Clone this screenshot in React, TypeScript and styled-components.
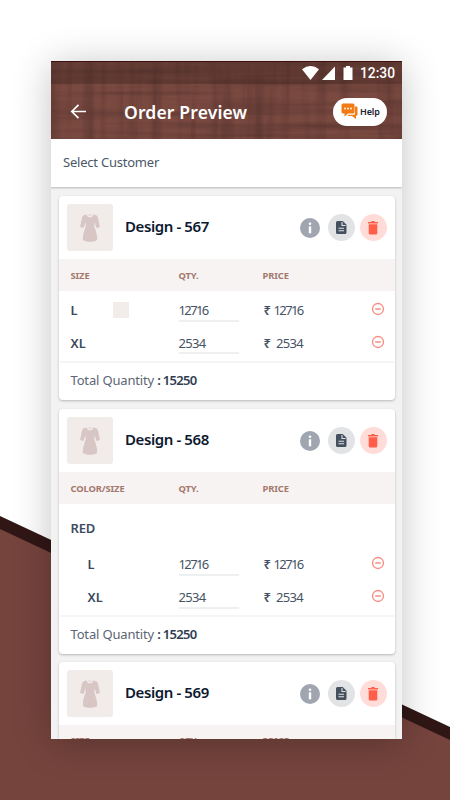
import React from "react";
import styled, { createGlobalStyle } from "styled-components";

const Global = createGlobalStyle`
  * { box-sizing: border-box; }
  body { margin: 0; font-family: "Noto Sans", "Open Sans", sans-serif; }
`;

const Page = styled.main`
  position: relative;
  width: 450px;
  height: 800px;
  padding: 61px 48px 61px 51px;
  overflow: hidden;
  background: #fff;
  isolation: isolate;
  &::before, &::after {
    content: "";
    position: absolute;
    inset: 0;
    z-index: -1;
  }
  &::before {
    background: #301716;
    clip-path: polygon(0 516px, 100% 727px, 100% 100%, 0 100%);
  }
  &::after {
    background: #75443d;
    clip-path: polygon(0 529px, 100% 740px, 100% 100%, 0 100%);
  }
`;

const Phone = styled.div`
  width: 351px;
  height: 678px;
  background: #f2f2f2;
  box-shadow: 0 4px 36px rgba(0, 0, 0, 0.24);
`;

const Screen = styled.div`
  display: flex;
  flex-direction: column;
  height: 100%;
  overflow: hidden;
`;

const Header = styled.header`
  position: relative;
  flex: none;
  height: 78px;
  border-top: 1px solid #3f0f0d;
  background: #7a4a40;
  isolation: isolate;
`;

const Fabric = styled.svg`
  position: absolute;
  inset: 0;
  width: 100%;
  height: 100%;
  z-index: -1;
  opacity: 0.6;
`;

const StatusBar = styled.div`
  display: flex;
  align-items: center;
  justify-content: flex-end;
  height: 22px;
  padding-right: 7px;
  background: rgba(50, 28, 26, 0.27);
  color: #fff;
  svg { display: block; }
`;

const Clock = styled.span`
  margin-left: 6.5px;
  font: 500 13.8px/22px Roboto, sans-serif;
`;

const TitleBar = styled.div`
  display: flex;
  align-items: center;
  height: 55px;
  padding: 0 15px 0 19px;
`;

const Title = styled.h1`
  flex: 1;
  margin: 0 0 0 37px;
  font-size: 17.5px;
  font-weight: 650;
  letter-spacing: 0.16px;
  color: #fff;
  white-space: nowrap;
`;

const HelpButton = styled.button`
  display: flex;
  align-items: center;
  gap: 2px;
  width: 54px;
  height: 28px;
  padding: 0 0 0 8px;
  border: 0;
  border-radius: 14px;
  background: #fff;
  color: #20202e;
  font: 600 9px "Noto Sans", sans-serif;
  letter-spacing: -0.15px;
`;

const Customer = styled.div`
  flex: none;
  height: 48px;
  padding-left: 12px;
  background: #fff;
  box-shadow: 0 1px 2px rgba(0, 0, 0, 0.25);
  color: #4b5868;
  font-size: 13px;
  line-height: 47px;
  letter-spacing: -0.22px;
`;

const List = styled.section`
  display: flex;
  flex-direction: column;
  gap: 9px;
  padding: 9px 7px 0 8px;
`;

const Card = styled.article`
  flex: none;
  overflow: hidden;
  border-radius: 4px;
  background: #fff;
  box-shadow: 0 1px 2.5px rgba(0, 0, 0, 0.25);
  &:last-child { margin-top: -1px; }
`;

const CardHeader = styled.div`
  display: flex;
  align-items: center;
  height: 63px;
  padding: 0 8.5px 0 8px;
`;

const Thumb = styled.div`
  display: flex;
  align-items: center;
  justify-content: center;
  width: 46px;
  height: 47px;
  border-radius: 3px;
  background: #f1ebea;
`;

const Name = styled.h2`
  flex: 1;
  margin: -3px 0 0 12px;
  font-size: 15px;
  font-weight: 600;
  letter-spacing: -0.4px;
  color: #0c1930;
  white-space: nowrap;
`;

const Round = styled.button<{ $size: number; $bg: string; $gap: number }>`
  display: flex;
  align-items: center;
  justify-content: center;
  flex: none;
  width: ${(p) => p.$size}px;
  height: ${(p) => p.$size}px;
  margin-left: ${(p) => p.$gap}px;
  padding: 0;
  border: 0;
  border-radius: 50%;
  background: ${(p) => p.$bg};
`;

const Columns = styled.div`
  display: grid;
  grid-template-columns: 108px 85px 1fr 14px;
  padding: 0 10px 0 11.5px;
`;

const TableHead = styled(Columns)`
  grid-template-columns: 108px 84px 1fr 14px;
  height: 32px;
  background: #f7f3f2;
  color: #a3796d;
  font-size: 9.4px;
  font-weight: 700;
  line-height: 34px;
  letter-spacing: -0.12px;
  ${Card}:last-child & { line-height: 32px; }
`;

const Group = styled.div`
  height: 41px;
  padding-top: 6px;
  padding-left: 11.5px;
  color: #3e4c5f;
  font-size: 13px;
  font-weight: 600;
  line-height: 36px;
  letter-spacing: -0.2px;
`;

const Row = styled(Columns)<{ $h: number }>`
  height: ${(p) => p.$h}px;
  color: #465364;
  font-size: 13px;
  line-height: 38px;
`;

const Size = styled.div<{ $indent: boolean }>`
  display: flex;
  align-items: center;
  height: 37px;
  padding-left: ${(p) => (p.$indent ? 17 : 0)}px;
  color: #3a475a;
  font-size: 12.8px;
  font-weight: 600;
`;

const Swatch = styled.i`
  width: 16px;
  height: 16px;
  margin-left: 35.5px;
  background: #f2eceb;
`;

const Qty = styled.div<{ $tight: boolean; $line: number }>`
  width: 60px;
  height: ${(p) => p.$line}px;
  border-bottom: 2px solid #eeeff0;
  letter-spacing: ${(p) => (p.$tight ? -1.6 : -0.7)}px;
`;

const Price = styled.div<{ $tight: boolean }>`
  display: flex;
  gap: ${(p) => (p.$tight ? 2 : 4.5)}px;
  letter-spacing: ${(p) => (p.$tight ? -1.6 : -0.7)}px;
`;

const Rupee = styled.span`
  width: 8px;
  font-weight: 600;
  letter-spacing: 0;
`;

const Remove = styled.div`
  display: flex;
  align-items: center;
  height: 36px;
`;

const Total = styled.footer`
  height: 39px;
  margin: 0 1px;
  padding-left: 10.5px;
  border-top: 2px solid #f4f5f6;
  color: #5c6675;
  font-size: 13px;
  line-height: 35px;
  letter-spacing: -0.16px;
  b { color: #313e52; font-weight: 600; letter-spacing: -0.7px; }
`;

const Dress = () => (
  <svg width="20" height="28" viewBox="0 0 20 28" fill="#d7c6c3">
    <path d="M4.600.9 6.600.5C7.300 4.300 12.700 4.300 13.400.5L15.400.9c2 .5 2.500 2 3 4.600L19.900 13l-3.500.9-1.700-5.700-.5 4.100c1.300 3.700 3.100 8.500 3 13.500-3 2.700-11.400 2.700-14.400 0-.1-5 1.700-9.800 3-13.500l-.5-4.100-1.700 5.700L.1 13l1.500-7.500c.5-2.600 1-4.100 3-4.600Z" />
    <path d="M7.600.6h4.800C12.200 2.500 7.800 2.500 7.600.6Z" opacity=".5" />
  </svg>
);

const DocIcon = () => (
  <svg width="11" height="13" viewBox="0 0 11 13">
    <path d="M1.500 0h5.200L10.500 3.800v7.700A1.500 1.500 0 0 1 9 13H1.500A1.500 1.500 0 0 1 0 11.500v-10A1.500 1.500 0 0 1 1.500 0Z" fill="#45505f" />
    <path d="M6 1v3.500h3.600M2.500 7.200h5.500M2.500 9.800h5.500" fill="none" stroke="#e0e2e4" strokeWidth="1.100" />
  </svg>
);

const TrashIcon = () => (
  <svg width="10" height="14" viewBox="0 0 10 14" fill="#ff5e48">
    <path d="M0 1h3l.8-1h2.400L7 1h3v1.600H0ZM.7 3.300h8.600v8.700a1.500 1.500 0 0 1-1.500 1.500H2.200a1.500 1.500 0 0 1-1.500-1.500Z" />
  </svg>
);

const InfoIcon = () => (
  <svg width="6" height="12" viewBox="0 0 6 12" fill="#fff">
    <circle cx="3" cy="1.800" r="1.300" />
    <rect x="1.800" y="4.300" width="2.400" height="7" />
  </svg>
);

const MinusIcon = () => (
  <svg width="14" height="14" viewBox="0 0 14 14" fill="none" stroke="#f98c80" strokeWidth="1.300">
    <circle cx="7" cy="7" r="5.500" />
    <path d="M4.200 7h5.600" />
  </svg>
);

type Line = { size: string; qty: string; h: number; line: number; swatch?: boolean };
type Design = { id: number; label: string; group?: string; lines: Line[]; total: string };

const designs: Design[] = [
  {
    id: 567, label: "SIZE", total: "15250",
    lines: [
      { size: "L", qty: "12716", h: 33, line: 31, swatch: true },
      { size: "XL", qty: "2534", h: 37, line: 30 },
    ],
  },
  {
    id: 568, label: "COLOR/SIZE", group: "RED", total: "15250",
    lines: [
      { size: "L", qty: "12716", h: 33, line: 31 },
      { size: "XL", qty: "2534", h: 37, line: 31 },
    ],
  },
  { id: 569, label: "SIZE", total: "15250", lines: [] },
];

function DesignCard({ design }: { design: Design }) {
  return (
    <Card>
      <CardHeader>
        <Thumb><Dress /></Thumb>
        <Name>Design - {design.id}</Name>
        <Round $size={20} $bg="#9fa6b0" $gap={0} aria-label="Details"><InfoIcon /></Round>
        <Round $size={27} $bg="#e1e3e5" $gap={8} aria-label="Notes"><DocIcon /></Round>
        <Round $size={27} $bg="#ffdcd8" $gap={5} aria-label="Delete"><TrashIcon /></Round>
      </CardHeader>
      <TableHead>
        <span>{design.label}</span>
        <span>QTY.</span>
        <span>PRICE</span>
      </TableHead>
      {design.group && <Group>{design.group}</Group>}
      {design.lines.map((l) => {
        const tight = l.qty.length > 4;
        return (
          <Row key={l.size} $h={l.h}>
            <Size $indent={!!design.group}>{l.size}{l.swatch && <Swatch />}</Size>
            <Qty $tight={tight} $line={l.line}>{l.qty}</Qty>
            <Price $tight={tight}><Rupee>₹</Rupee>{l.qty}</Price>
            <Remove><MinusIcon /></Remove>
          </Row>
        );
      })}
      {design.lines.length > 0 && <Total>Total Quantity <b>: {design.total}</b></Total>}
    </Card>
  );
}

export default function App() {
  return (
    <>
      <Global />
      <Page>
        <Phone>
          <Screen>
            <Header>
              <Fabric>
                <filter id="warp" x="0" y="0" width="100%" height="100%" colorInterpolationFilters="sRGB">
                  <feTurbulence type="fractalNoise" baseFrequency=".09 .006" numOctaves="3" seed="4" />
                  <feColorMatrix values="0 0 0 0 .25  0 0 0 0 .14  0 0 0 0 .14  1.300 0 0 0 -.5" />
                </filter>
                <filter id="weft" x="0" y="0" width="100%" height="100%" colorInterpolationFilters="sRGB">
                  <feTurbulence type="fractalNoise" baseFrequency=".006 .13" numOctaves="3" seed="9" />
                  <feColorMatrix values="0 0 0 0 .25  0 0 0 0 .14  0 0 0 0 .14  1.300 0 0 0 -.5" />
                </filter>
                <rect width="100%" height="100%" filter="url(#warp)" />
                <rect width="100%" height="100%" filter="url(#weft)" />
              </Fabric>
              <StatusBar>
                <svg width="51" height="16" viewBox="0 0 51 16" fill="#fff">
                  <path d="M8.500 15 0 4.200Q8.500-2 17 4.200Z" />
                  <path d="M20 15 33 1.500V15Z" />
                  <path d="M41.500 2.500H44V1h4v1.500h2.500V15h-9Z" />
                </svg>
                <Clock>12:30</Clock>
              </StatusBar>
              <TitleBar>
                <svg width="17" height="16" viewBox="0 0 17 16" fill="none" stroke="#fff" strokeWidth="1.700">
                  <path d="M16 7.500H2M8.500.8 1.800 7.500l6.700 6.700" />
                </svg>
                <Title>Order Preview</Title>
                <HelpButton>
                  <svg width="17" height="17" viewBox="0 0 17 17">
                    <path d="M14 3.500h1.200q1.300 0 1.300 1.300v7q0 1-1.300 1H15V16l-4-3H7.500l-.7-1.200H13q1 0 1-1Z" fill="#f27b13" />
                    <path d="M2 .5h10q1.500 0 1.500 1.500v7q0 1.500-1.500 1.500H7L3.500 13.500v-3H2Q.5 10.500.5 9V2Q.5.5 2 .5Z" fill="#f27b13" />
                    <g fill="#fff"><circle cx="4" cy="5.500" r=".9" /><circle cx="7" cy="5.500" r=".9" /><circle cx="10" cy="5.500" r=".9" /></g>
                  </svg>
                  Help
                </HelpButton>
              </TitleBar>
            </Header>
            <Customer>Select Customer</Customer>
            <List>
              {designs.map((d) => <DesignCard key={d.id} design={d} />)}
            </List>
          </Screen>
        </Phone>
      </Page>
    </>
  );
}
